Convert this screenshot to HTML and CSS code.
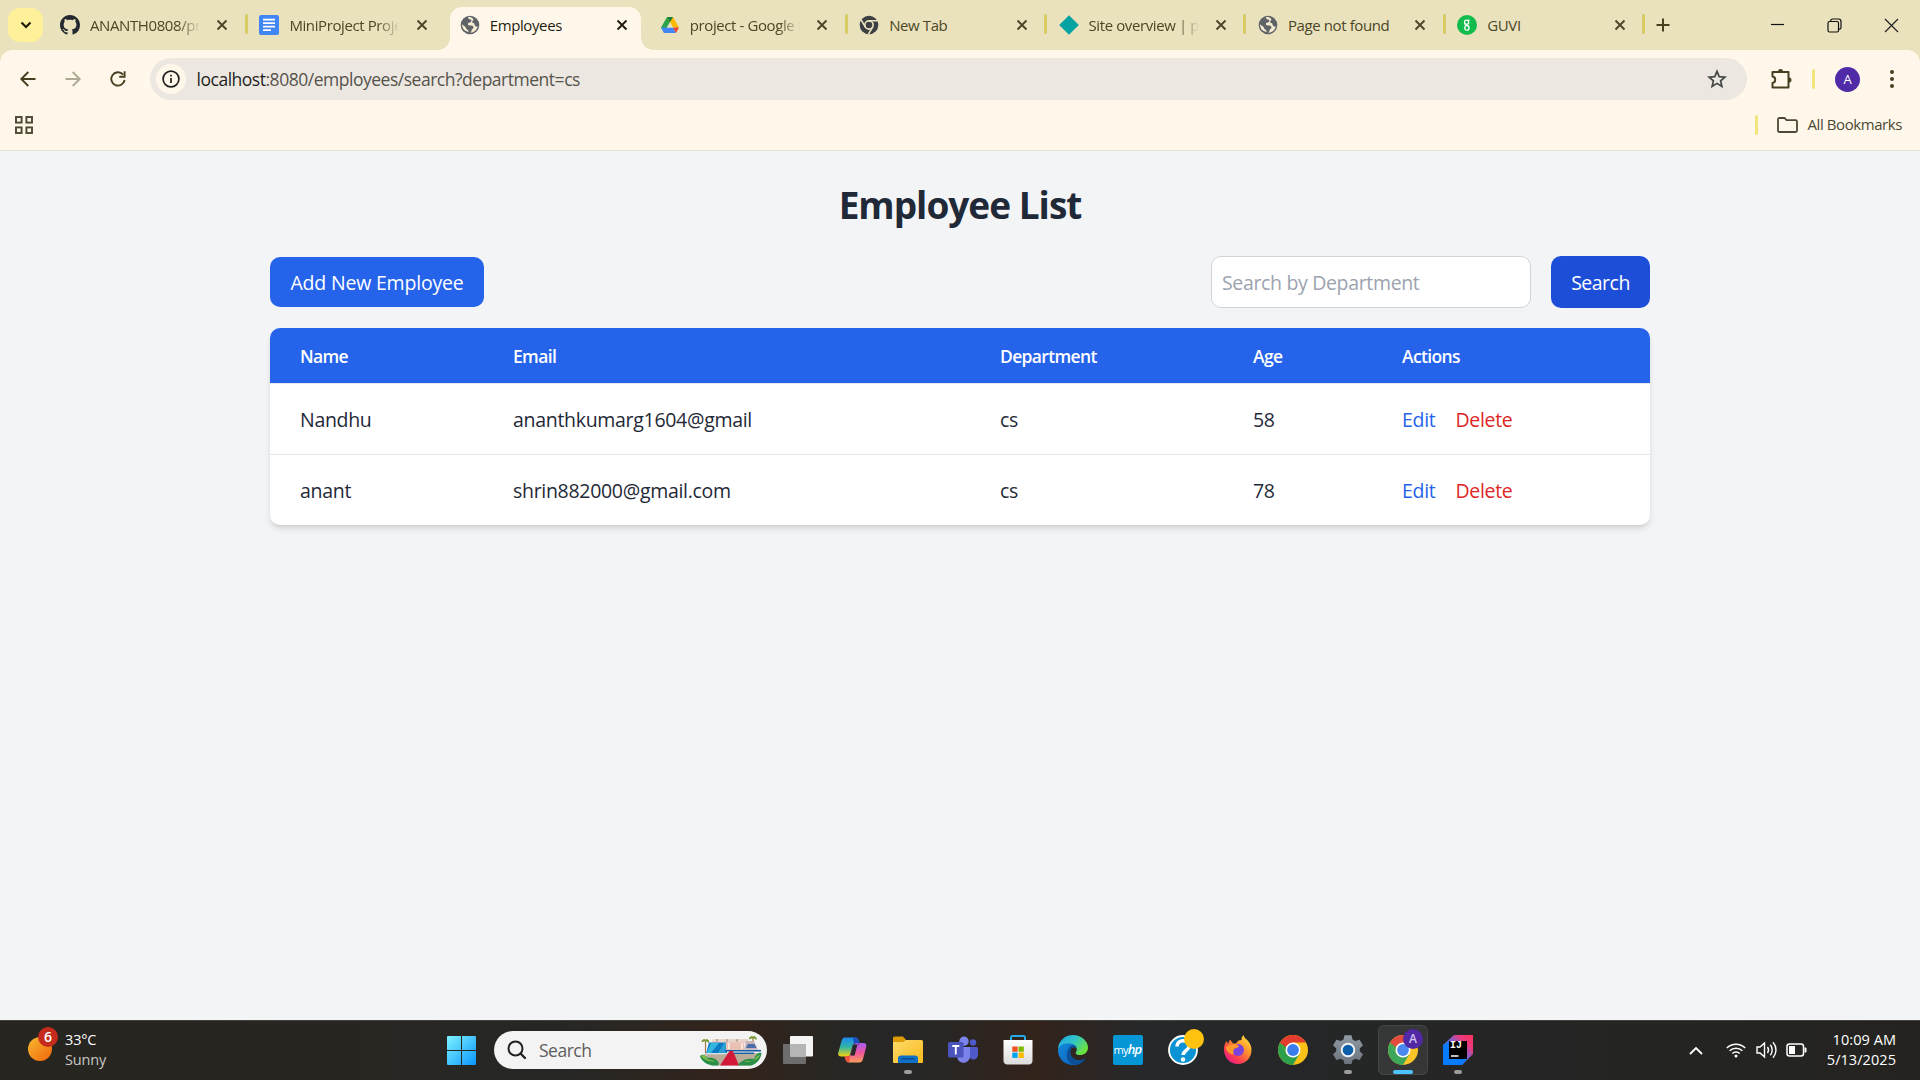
FILE: index.html
```html
<!DOCTYPE html>
<html lang="en">
<head>
<meta charset="utf-8">
<title>Employees</title>
<link rel="stylesheet" href="styles.css">
</head>
<body>
<svg class="defs" width="0" height="0" aria-hidden="true">
  <defs>
    <linearGradient id="sun" x1="0" y1="0" x2="1" y2="1"><stop offset="0" stop-color="#f7b92e"/><stop offset="1" stop-color="#f0650c"/></linearGradient>
    <linearGradient id="win" x1="0" y1="0" x2="1" y2="1"><stop offset="0" stop-color="#7df3ff"/><stop offset="1" stop-color="#0a96fb"/></linearGradient>
    <linearGradient id="fold" x1="0" y1="0" x2="1" y2="1"><stop offset="0" stop-color="#ffdb6b"/><stop offset="1" stop-color="#f9b91c"/></linearGradient>
    <linearGradient id="edgeTop" x1="0" y1="0" x2="1" y2="0.6"><stop offset="0" stop-color="#1da4e6"/><stop offset=".5" stop-color="#2fc3c9"/><stop offset="1" stop-color="#6ce23c"/></linearGradient>
    <linearGradient id="edgeBot" x1="0" y1="0" x2="1" y2="1"><stop offset="0" stop-color="#1288dc"/><stop offset="1" stop-color="#0b5cb4"/></linearGradient>
    <linearGradient id="copA" x1="0" y1="0" x2="0" y2="1"><stop offset="0" stop-color="#1e8af2"/><stop offset=".5" stop-color="#2fb5a5"/><stop offset="1" stop-color="#f4d30e"/></linearGradient>
    <linearGradient id="copB" x1="0" y1="0" x2="0" y2="1"><stop offset="0" stop-color="#a85cf5"/><stop offset=".5" stop-color="#f0559a"/><stop offset="1" stop-color="#fd9f5a"/></linearGradient>
    <linearGradient id="fox" x1="1" y1="0" x2="0.2" y2="1"><stop offset="0" stop-color="#fff04a"/><stop offset=".4" stop-color="#ff9a2a"/><stop offset=".75" stop-color="#ff3f50"/><stop offset="1" stop-color="#e3158a"/></linearGradient>
    <linearGradient id="ijB" x1="0" y1="1" x2="1" y2="0"><stop offset="0" stop-color="#087cfa"/><stop offset=".5" stop-color="#6b6ae0"/><stop offset=".75" stop-color="#e83a7d"/><stop offset="1" stop-color="#fe315d"/></linearGradient>
    <linearGradient id="bag" x1="0" y1="0" x2="0" y2="1"><stop offset="0" stop-color="#ffffff"/><stop offset="1" stop-color="#dcdcdc"/></linearGradient>
    <linearGradient id="gear" x1="0" y1="0" x2="0" y2="1"><stop offset="0" stop-color="#8f99a3"/><stop offset="1" stop-color="#6c757e"/></linearGradient>
    <symbol id="x" viewBox="0 0 12 12"><path d="M1.500 1.500l9 9M10.500 1.500l-9 9" stroke="currentColor" stroke-width="1.900" fill="none"/></symbol>
    <symbol id="globe" viewBox="0 0 20 20"><circle cx="10" cy="10" r="9.300" fill="#5f6368"/><path d="M8.200 2.100c-.5 1.500.8 2.300 2.200 2.500 1.200.2 1.400 1.600.4 2.300-1 .7-2.800.4-2.900 2-.1 1.400 1.300 1.600 2.800 1.500 1.800-.1 2.900.7 2.700 2.300-.2 1.200-1.700 1.300-1.900 2.700-.1.900-.4 1.700-1.300 2.400 4-.1 7-2.900 7.500-6.500-1.300.6-2.400.1-2.900-1-.5-1-.2-1.900-1.500-2.200-1.200-.3-1.700-1.200-.7-2.100.8-.7 1-1.600.4-2.300C11.600 2.100 9.900 1.700 8.200 2.100zM2.100 9c-.3 2.900 1.200 5.700 3.500 7.100l3 1c.3-1.200-.5-2-1.500-2.500-1-.6-.9-1.700-1.600-2.600C4.600 10.900 3 10.500 2.100 9z" fill="#f3ecd2"/></symbol>
    <symbol id="chrome" viewBox="0 0 30 30"><circle cx="15" cy="15" r="15" fill="#fbc116"/><path d="M2.010 7.500A15 15 0 0 0 15 30L21.500 18.750 15 15 8.500 18.750z" fill="#2da04b"/><path d="M2.010 7.500A15 15 0 0 1 27.990 7.500H15L8.500 11.250 7 14z" fill="#e33b2e"/><path d="M2.010 7.500L8.500 18.750 9 13z" fill="#2da04b"/><circle cx="15" cy="15" r="7.500" fill="#fff"/><circle cx="15" cy="15" r="5.900" fill="#3b7ded"/></symbol>
  </defs>
</svg>

<header class="browser">
  <div class="tabstrip">
    <button class="tabsearch"><svg width="12" height="8" viewBox="0 0 12 8"><path d="M1.500 1.500L6 6l4.500-4.500" stroke="#1f1c08" stroke-width="2.200" fill="none"/></svg></button>
    <div class="tabs">
      <div class="tab"><svg class="fav" viewBox="0 0 16 16"><path fill="#24292f" d="M8 0C3.580 0 0 3.580 0 8c0 3.540 2.290 6.530 5.470 7.590.4.070.55-.17.55-.38 0-.19-.01-.82-.01-1.490-2.010.37-2.530-.49-2.690-.94-.09-.23-.48-.94-.82-1.130-.28-.15-.68-.52-.01-.53.630-.01 1.080.58 1.230.82.72 1.210 1.870.87 2.330.66.070-.52.280-.87.510-1.070-1.780-.2-3.640-.89-3.640-3.950 0-.87.310-1.590.82-2.150-.08-.2-.36-1.020.08-2.120 0 0 .67-.21 2.200.82.640-.18 1.320-.27 2-.27s1.360.09 2 .27c1.530-1.040 2.200-.82 2.200-.82.440 1.100.160 1.920.080 2.120.510.560.820 1.270.820 2.150 0 3.070-1.870 3.750-3.650 3.950.290.250.540.730.540 1.480 0 1.070-.01 1.930-.01 2.200 0 .210.150.460.550.380A8.010 8.010 0 0 0 16 8c0-4.420-3.580-8-8-8z"/></svg><span class="title fade">ANANTH0808/proj</span><svg class="close"><use href="#x"/></svg></div>
      <div class="tab before-active"><svg class="fav" viewBox="0 0 20 20"><rect width="20" height="20" rx="2" fill="#4285f4"/><path d="M4 4.700h12M4 8.200h12M4 11.700h12M4 15.200h8" stroke="#fff" stroke-width="1.800"/></svg><span class="title fade">MiniProject Project</span><svg class="close"><use href="#x"/></svg></div>
      <div class="tab active"><svg class="fav" viewBox="0 0 20 20"><use href="#globe"/></svg><span class="title">Employees</span><svg class="close"><use href="#x"/></svg></div>
      <div class="tab"><svg class="fav" viewBox="0 0 20 20"><path d="M7 2h6l-3 5.200L4 17.500 1 12.400z" fill="#2ba24c"/><path d="M7 2h6l6 10.400h-6z" fill="#ffba00"/><path d="M7 2h6l-3 5.200z" fill="#188038"/><path d="M1 12.400h12L16 18H4z" fill="#4285f4"/><path d="M13 12.400h6L16 18z" fill="#ea4335"/><path d="M10 7.200l3 5.200H7z" fill="#ebe3bf"/></svg><span class="title fade">project - Google Dr</span><svg class="close"><use href="#x"/></svg></div>
      <div class="tab"><svg class="fav" viewBox="0 0 20 20"><circle cx="10" cy="10" r="9.300" fill="#3c4043"/><circle cx="10" cy="10" r="4.100" fill="none" stroke="#ebe3bf" stroke-width="1.600"/><path d="M10 5.800h8.700M6.400 12.100L2 4.700M13.600 12.100L9.300 19.400" stroke="#ebe3bf" stroke-width="1.600"/></svg><span class="title">New Tab</span><svg class="close"><use href="#x"/></svg></div>
      <div class="tab"><svg class="fav" viewBox="0 0 20 20"><path d="M10 .2L19.800 10 10 19.800.2 10z" fill="#05a3a1"/></svg><span class="title fade">Site overview | proj</span><svg class="close"><use href="#x"/></svg></div>
      <div class="tab"><svg class="fav" viewBox="0 0 20 20"><use href="#globe"/></svg><span class="title">Page not found</span><svg class="close"><use href="#x"/></svg></div>
      <div class="tab"><svg class="fav" viewBox="0 0 20 20"><circle cx="10" cy="10" r="10" fill="#11bb4c"/><g fill="none" stroke="#fff" stroke-width="1.300"><circle cx="9.600" cy="7.200" r="2.100"/><path d="M11.200 5.500l1.300-.7M8.600 9.100c-1 .8.300 1.300 1.500 1.400 2.600.2 2.600 4.700-.2 4.700s-2.900-3.600-.8-4"/></g></svg><span class="title">GUVI</span><svg class="close"><use href="#x"/></svg></div>
    </div>
    <button class="newtab"><svg width="14" height="14" viewBox="0 0 14 14"><path d="M7 .5v13M.5 7h13" stroke="#45401f" stroke-width="2"/></svg></button>
    <div class="winctl">
      <svg width="15" height="15" viewBox="0 0 15 15"><path d="M1 6.500h13" stroke="#111" stroke-width="1.200"/></svg>
      <svg width="15" height="15" viewBox="0 0 15 15" fill="none" stroke="#111" stroke-width="1.200"><rect x="1" y="3.500" width="10.500" height="10.500" rx="1.500"/><path d="M3.800 3.300V2.600C3.800 1.600 4.500 1 5.400 1h6.200C13 1 14 2 14 3.400v6c0 1-.6 1.700-1.600 1.700h-.6"/></svg>
      <svg width="15" height="15" viewBox="0 0 15 15"><path d="M1 1l13 13M14 1L1 14" stroke="#222" stroke-width="1.200"/></svg>
    </div>
  </div>

  <div class="toolbar">
    <nav class="nav">
      <svg width="18" height="18" viewBox="0 0 18 18" fill="none" stroke="#45401f" stroke-width="1.900"><path d="M16.500 9H2.500M9.300 2L2.300 9l7 7"/></svg>
      <svg width="18" height="18" viewBox="0 0 18 18" fill="none" stroke="#aca995" stroke-width="1.900"><path d="M1.500 9h14M8.700 2l7 7-7 7"/></svg>
      <svg width="18" height="18" viewBox="0 0 18 18" fill="none" stroke="#45401f" stroke-width="1.900"><path d="M15.600 10a6.700 6.700 0 1 1-1.500-5.400"/><path d="M15.600 1.300v5.400h-5.400"/></svg>
    </nav>
    <div class="omnibox">
      <span class="siteinfo"><svg width="18" height="18" viewBox="0 0 18 18"><circle cx="9" cy="9" r="7.900" fill="none" stroke="#1f1f1f" stroke-width="1.700"/><path d="M9 8v5M9 4.800v1.700" stroke="#1f1f1f" stroke-width="1.700"/></svg></span>
      <span class="url"><b>localhost</b>:8080/employees/search?department=cs</span>
      <svg class="star" width="20" height="20" viewBox="0 0 20 20"><path d="M10 2.300l2.200 5.300 5.700.5-4.300 3.700 1.300 5.600-4.900-3-4.900 3 1.300-5.600L2.100 8.100l5.700-.5z" fill="none" stroke="#444746" stroke-width="1.700"/></svg>
    </div>
    <div class="actions">
      <svg width="22" height="22" viewBox="0 0 22 22"><path d="M2.500 4h16v15.500h-16v-4.600c3.600-.4 3.600-5.900 0-6.300z" fill="none" stroke="#45401f" stroke-width="2" stroke-linejoin="round"/><path d="M8 3.500a2.500 2.500 0 0 1 5 0zM19 9.500a2.500 2.500 0 0 1 0 5z" fill="#45401f"/></svg>
      <i class="divider"></i>
      <span class="avatar">A</span>
      <svg width="4" height="20" viewBox="0 0 4 20" fill="#45401f"><circle cx="2" cy="3" r="2"/><circle cx="2" cy="10" r="2"/><circle cx="2" cy="17" r="2"/></svg>
    </div>
  </div>

  <div class="bookmarks">
    <svg width="18" height="18" viewBox="0 0 18 18" fill="none" stroke="#4b4833" stroke-width="1.900"><rect x="1" y="1" width="5.600" height="5.600"/><rect x="11.400" y="1" width="5.600" height="5.600"/><rect x="1" y="11.400" width="5.600" height="5.600"/><rect x="11.400" y="11.400" width="5.600" height="5.600"/></svg>
    <div class="allbm"><i class="divider"></i><svg width="21" height="16" viewBox="0 0 21 16"><path d="M1 2.500C1 1.600 1.600 1 2.500 1h5l2 2.200h9c.9 0 1.500.6 1.500 1.500v8.800c0 .9-.6 1.500-1.500 1.500h-16c-.9 0-1.500-.6-1.500-1.500z" fill="none" stroke="#4b4833" stroke-width="1.800"/></svg><span>All Bookmarks</span></div>
  </div>
</header>

<main class="page">
  <h1>Employee List</h1>
  <div class="controls">
    <a class="btn add">Add New Employee</a>
    <form class="search">
      <input type="text" placeholder="Search by Department">
      <button type="button" class="btn go">Search</button>
    </form>
  </div>
  <table class="list">
    <colgroup><col class="c1"><col class="c2"><col class="c3"><col class="c4"><col class="c5"></colgroup>
    <thead><tr><th>Name</th><th>Email</th><th>Department</th><th>Age</th><th>Actions</th></tr></thead>
    <tbody>
      <tr><td>Nandhu</td><td>ananthkumarg1604@gmail</td><td>cs</td><td>58</td><td><div class="ops"><a class="edit">Edit</a><a class="del">Delete</a></div></td></tr>
      <tr><td>anant</td><td>shrin882000@gmail.com</td><td>cs</td><td>78</td><td><div class="ops"><a class="edit">Edit</a><a class="del">Delete</a></div></td></tr>
    </tbody>
  </table>
</main>

<footer class="taskbar">
  <div class="weather">
    <div class="sunbox"><svg width="24" height="24" viewBox="0 0 24 24"><circle cx="12" cy="12" r="12" fill="url(#sun)"/></svg><span class="count">6</span></div>
    <div class="wtext"><span>33°C</span><span class="cond">Sunny</span></div>
  </div>
  <div class="dock">
    <svg class="start" width="29" height="29" viewBox="0 0 29 29"><path d="M1 0h13v14H0V1a1 1 0 0 1 1-1zM15 0h13a1 1 0 0 1 1 1v13H15zM0 15h14v14H1a1 1 0 0 1-1-1zM15 15h14v13a1 1 0 0 1-1 1H15z" fill="url(#win)"/></svg>
    <div class="tsearch">
      <svg width="20" height="20" viewBox="0 0 20 20"><circle cx="8.500" cy="8.500" r="7" fill="none" stroke="#222" stroke-width="2"/><path d="M13.500 13.500L18 18" stroke="#222" stroke-width="2.400" stroke-linecap="round"/></svg>
      <span>Search</span>
      <svg class="art" width="62" height="31" viewBox="0 0 62 31">
        <path d="M5 18h52l-6 12.500H12z" fill="#b9ac98"/>
        <path d="M5.500 6v14M53 3v6" stroke="#a5764a" stroke-width="1.200"/>
        <path d="M5.500 5C3.500 4 2 5 2 7c1-1 2-1 3.500-1 1 0 2 0 3 1.500C9 5 7.500 4 5.500 5zM53 2c-2-1-3.500 0-3.500 2 1-1 2-1 3.500-1 1 0 2 0 3 1.500C56.500 2 55 1 53 2z" fill="#7a9a35" stroke="#7a9a35"/>
        <path d="M13 4h35v4H11z" fill="#e9d5c9"/><path d="M17 4v3M27 4v3M37 4v3" stroke="#a08078"/>
        <path d="M9 7.500h18v11H6z" fill="#0b7cc4"/><path d="M11 8h8l-8 10H6.500z" fill="#35b6e0"/><path d="M24 8h2v10h-8z" fill="#2ba0d5"/><path d="M5 18.700h22" stroke="#e4e9f0" stroke-width="1.200"/>
        <path d="M26 7.500h18v8H26z" fill="#e8c0b4"/><path d="M29 8v6M42 8v6" stroke="#f7e6dc" stroke-width="2"/>
        <path d="M46 6h8l4 9H44z" fill="#c9b3bb"/><path d="M48 9h6.500l2 4H46z" fill="#4a6da8"/><path d="M44 14.500h16v2H44z" fill="#c4d3e6"/>
        <path d="M25 15h36v1.500H25zM34 17.500h20v1.500H34z" fill="#1b60a6"/>
        <path d="M29.500 16h3.500l6 14.500H20z" fill="#d3183a"/>
        <path d="M0 21c2-2.500 6-1 8 2 4-1 9 1 10 4 1 1 1 2.500 0 3.500h-6C5 29 1 25 0 21z" fill="#2a8f48"/><path d="M1 20.500c3-1 5 1 6 3s6 1 8 3c-5 0-11-1-14-6z" fill="#8dbd4a"/>
        <path d="M61.500 18c-4-1-6 2-7.500 6-5-1-10 0-13 3-2 1-3 2-3 3.500h13c5-1 10-6 10.500-12.500z" fill="#2a8f48"/><path d="M60 20c-3 0-4 3-6 5s-7 0-10 2c6 0 13-1 16-7z" fill="#8dbd4a"/>
      </svg>
    </div>
    <div class="apps">
      <span class="app"><svg width="30" height="28" viewBox="0 0 30 28"><rect y="8" width="23" height="20" rx="1" fill="#6d6d6d"/><rect x="7" width="23" height="20.500" rx="1" fill="#f4f4f4"/><path d="M7 8h16v12.500H7z" fill="#b5b5b5"/></svg></span>
      <span class="app"><svg width="29" height="26" viewBox="0 0 29 26"><path d="M7 .5h10c2.300 0 3.300 1.500 4 4l.4 1.500h-3c-2.500 0-3.500 1.500-4.200 4l-2 7c-.5 1.800-1.200 2.500-3 2.500H3c-2.400 0-3.300-1.600-2.700-4L3.500 4C4.200 1.700 5 .5 7 .5z" fill="url(#copA)"/><path d="M15 .5h2c2.300 0 3.300 1.500 4 4l.4 1.500h-3c-1 0-1.800.2-2.500.8z" fill="#1a4fc0"/><path d="M21.500 6h4c2.400 0 3.300 1.600 2.700 4l-3.200 12c-.6 2.200-1.500 3.500-3.500 3.500h-10c-2.300 0-3.500-1-4.200-4L6.500 19.500h3.200c1.800 0 2.600-1.200 3-2.500l2.500-8c.7-2 1.800-3 3.800-3h1.500l-2.800 9h-3z" fill="url(#copB)"/><path d="M6.500 19.500h3.200c1.200 0 2-.6 2.500-1.500l-1 7.500c-2.300 0-3.200-1.500-4-4z" fill="#f2503b"/><path d="M15.500 7.500h4l-3 11h-4z" fill="#252729"/></svg></span>
      <span class="app run"><svg width="30" height="28" viewBox="0 0 30 28"><path d="M0 2A1.500 1.500 0 0 1 1.500.5H10l3 3.500v4H0z" fill="#dd9b08"/><path d="M0 6h10l3-2h15.500A1.500 1.500 0 0 1 30 5.500V26a1 1 0 0 1-1 1H1a1 1 0 0 1-1-1z" fill="url(#fold)"/><path d="M5 27v-4.500c0-2 1-3 3-3h14c2 0 3 1 3 3V27z" fill="#0e70c6"/><path d="M8.500 22.800h13" stroke="#0a478a" stroke-width="1.300"/></svg></span>
      <span class="app"><svg width="30" height="28" viewBox="0 0 30 28"><circle cx="25" cy="6.500" r="3.200" fill="#5059c9"/><path d="M20 11h8.500c.8 0 1.500.6 1.500 1.500V18c0 7-8 7-9 2z" fill="#5059c9"/><circle cx="16" cy="5.200" r="4.700" fill="#7b83eb"/><path d="M9 11h13v9c0 9-13 9-13 0z" fill="#7b83eb"/><rect y="6" width="15.500" height="15.500" rx="1.500" fill="#4b53bc"/><path d="M4.300 10h7M7.800 10v8.500" stroke="#fff" stroke-width="1.900"/></svg></span>
      <span class="app"><svg width="30" height="30" viewBox="0 0 30 30"><path d="M8 6V2.500C8 1.500 8.500 1 9.500 1h11c1 0 1.500.5 1.500 1.500V6" fill="none" stroke="#25a7e8" stroke-width="2"/><path d="M.5 5h29v20.500c0 2.500-1.500 4-4 4h-21c-2.500 0-4-1.500-4-4z" fill="url(#bag)"/><path d="M9.300 11.500h5.300v5.300H9.300z" fill="#f25022"/><path d="M15.500 11.500h5.300v5.300h-5.300z" fill="#7fba00"/><path d="M9.300 17.600h5.300v5.300H9.300z" fill="#00a4ef"/><path d="M15.500 17.600h5.300v5.300h-5.300z" fill="#ffb900"/></svg></span>
      <span class="app"><svg width="30" height="30" viewBox="0 0 30 30"><path d="M0 15C0 6 7 0 15 0s15 6 15 12.500c0 5-4 7.500-8 7.500-3.500 0-5-1.200-4-2.700 2.500-4-1-7.800-6-7.800C6 9.500 1 11 0 15z" fill="url(#edgeTop)"/><path d="M0 15C1 11 5 8.200 10.500 8.200c5.500 0 8 3 8.200 5.500-1-2-6-2.500-6.500 2.500-.5 6 5 9.500 10 9 2.500-.2 4-1 5.300-1.800C24.500 28 20 30 15 30 6.500 30 0 23.500 0 15z" fill="url(#edgeBot)"/><path d="M12.200 16.200c-.5 6 5 9.500 10 9 2.500-.2 4-1 5.300-1.800-2.500 4-7 6.300-10.500 6.400C9 29 6 19 12.200 11.200c2-1.700 6-.8 6.500 2.500-1-2-6-2.500-6.500 2.500z" fill="#0c4f97"/></svg></span>
      <span class="app"><span class="hp">my<b>hp</b></span></span>
      <span class="app"><svg width="30" height="30" viewBox="0 0 30 30"><circle cx="15" cy="15" r="14" fill="#0b93d4" stroke="#fff" stroke-width="1.800"/><path d="M9 11.500c0-8 12.500-7.500 12 0-.3 4-5.800 4-5.800 8.500" fill="none" stroke="#fff" stroke-width="3.600"/><circle cx="15" cy="24.500" r="2.200" fill="#fff"/></svg><i class="notice"></i></span>
      <span class="app"><svg width="30" height="30" viewBox="0 0 30 30"><path d="M1 14c0-3 1-6 2.500-8L5 9l2-4.500 3 4h3l2.500-3 3-.5c0-2 .5-3.500 2-5 .5 3 3 4 5 6.500 2 2.500 3.300 5.500 3 9C28 23.500 22.500 29 15 29 7 29 1 23 1 14z" fill="url(#fox)"/><circle cx="15" cy="15" r="6" fill="#7a43dc"/><path d="M3 12c3-2 6-3 10-3l3 2c-1 2-3 2-4.500 2.500C10 15 10 17 11 19.500 6 19 3 16 3 12z" fill="#ff9a2a"/></svg></span>
      <span class="app"><svg width="30" height="30"><use href="#chrome"/></svg></span>
      <span class="app run"><svg width="30" height="30" viewBox="0 0 30 30"><path d="M11.500 1h7l1 4.300 2.800 1.600 4.300-1.300 3.400 6-3.200 3v3.200l3.200 3-3.400 6-4.300-1.300-2.800 1.500-1 4h-7l-1-4-2.800-1.500-4.300 1.300-3.400-6 3.200-3v-3.200l-3.200-3 3.400-6 4.300 1.300L10.500 5.300z" transform="translate(0 -.7) scale(1 .96)" fill="url(#gear)"/><circle cx="15" cy="15" r="6.300" fill="#0c5eaa" stroke="#f2f2f2" stroke-width="1.900"/></svg></span>
      <span class="app cur"><svg width="30" height="30"><use href="#chrome"/></svg><i class="prof">A</i></span>
      <span class="app run"><svg width="30" height="30" viewBox="0 0 30 30"><path d="M0 10L11 0h19v19L19 30H1.500A1.500 1.500 0 0 1 0 28.500z" fill="url(#ijB)"/><path d="M0 10l6-3 4 17h14l-5 6H1.500A1.500 1.500 0 0 1 0 28.500z" fill="#087cfa"/><rect x="6" y="6" width="18" height="18" fill="#000"/><path d="M8 21h7.500" stroke="#fff" stroke-width="1.500"/></svg><em>IJ</em></span>
    </div>
  </div>
  <div class="tray">
    <svg class="chev" width="14" height="9" viewBox="0 0 14 9"><path d="M1 8l6-6 6 6" fill="none" stroke="#fff" stroke-width="1.800"/></svg>
    <svg class="wifi" width="20" height="16" viewBox="0 0 20 16" fill="none" stroke="#fff" stroke-width="1.500"><path d="M.8 6a13 13 0 0 1 18.400 0M3.600 8.800a9 9 0 0 1 12.800 0M6.300 11.500a5.300 5.300 0 0 1 7.400 0"/><circle cx="10" cy="14" r="1.500" fill="#fff" stroke="none"/></svg>
    <svg class="vol" width="21" height="18" viewBox="0 0 21 18" fill="none" stroke="#fff" stroke-width="1.400"><path d="M1 6h3l4.500-4v14L4 12H1zM11.500 6c1.300 1.800 1.300 4.200 0 6M14.300 3.800c2.500 3 2.500 7.400 0 10.400M17 1.200c4 4.500 4 11.100 0 15.600"/></svg>
    <svg class="bat" width="21" height="14" viewBox="0 0 21 14"><rect x="1" y="1" width="16.500" height="12" rx="2.500" fill="none" stroke="#fff" stroke-width="1.500"/><path d="M3 3h6v8H3zM18.500 4.500h1.200c.6 0 .8.300.8.800v3.400c0 .5-.2.800-.8.800h-1.200z" fill="#fff"/></svg>
    <div class="clock"><span>10:09 AM</span><span>5/13/2025</span></div>
  </div>
</footer>
</body>
</html>
```
FILE: styles.css
```css
* { box-sizing: border-box; }
body {
  margin: 0;
  width: 1920px;
  height: 1080px;
  overflow: hidden;
  display: flex;
  flex-direction: column;
  font-family: "Open Sans", "Noto Sans", sans-serif;
  background: #f3f4f6;
}
button { border: 0; padding: 0; font: inherit; }
svg { flex: none; display: block; }
.defs { position: absolute; }

/* browser frame */
.browser { height: 151px; background: #fff8ea; border-bottom: 1px solid #e7e2d4; flex: none; }
.tabstrip { height: 50px; background: #eae2bd; display: flex; align-items: center; padding-left: 8px; }
.tabsearch { width: 35px; height: 34px; border-radius: 12px; background: #fff19a; display: grid; place-items: center; margin-right: 4px; }
.tabs { display: flex; height: 50px; }
.tab { flex: none; width: 199.400px; display: flex; align-items: center; padding: 0 18px 0 13px; position: relative; isolation: isolate; color: #4b4628; }
.tab::after { content: ""; position: absolute; right: -1.500px; top: 14px; width: 3px; height: 20px; border-radius: 2px; background: #d8cb66; }
.before-active::after { display: none; }
.fav { width: 20px; height: 20px; margin-right: 10px; }
.title { width: 113px; font-size: 15px; line-height: 24px; white-space: nowrap; overflow: hidden; letter-spacing: -.4px; }
.fade { -webkit-mask-image: linear-gradient(90deg, #000 78%, transparent 98%); mask-image: linear-gradient(90deg, #000 78%, transparent 98%); }
.close { width: 12px; height: 12px; margin-left: auto; }
.active { color: #1f1d10; margin: 0 .600px 0 1px; }
.active::before, .active::after { content: ""; position: absolute; z-index: -1; }
.active::before {
  left: -9px; right: -7px; bottom: 0; height: 12px;
  background:
    radial-gradient(circle at 0 0, transparent 11.500px, #fff8ea 12px) left / 12px 12px no-repeat,
    radial-gradient(circle at 100% 0, transparent 11.500px, #fff8ea 12px) right / 12px 12px no-repeat;
}
.active::after { left: 3px; right: 5px; top: 7px; width: auto; height: 43px; border-radius: 12px 12px 0 0; background: #fff8ea; }
.newtab { width: 39px; height: 34px; background: none; display: grid; place-items: center; }
.winctl { margin-left: auto; display: flex; gap: 42px; padding-right: 21.500px; }

.toolbar {
  height: 58px; display: flex; align-items: center;
  background:
    radial-gradient(circle at 12px 12px, #fff8ea 11.500px, #eae2bd 12px) 0 0 / 12px 12px no-repeat,
    radial-gradient(circle at 0 12px, #fff8ea 11.500px, #eae2bd 12px) 100% 0 / 12px 12px no-repeat;
}
.nav { display: flex; gap: 27px; padding-left: 18.500px; width: 150px; }
.omnibox { width: 1597px; height: 42px; border-radius: 21px; background: #ece8e1; display: flex; align-items: center; padding: 0 20px 0 6px; }
.siteinfo { width: 30px; height: 30px; border-radius: 50%; background: #fff8ea; display: grid; place-items: center; margin-right: 10.500px; }
.url { font-size: 17.500px; line-height: 24px; padding-bottom: 1px; color: #56534d; letter-spacing: -.48px; }
.url b { font-weight: 400; color: #1f1f1f; }
.star { margin-left: auto; }
.actions { display: flex; align-items: center; padding-left: 23px; }
.divider { width: 3px; height: 20px; border-radius: 2px; background: #f2e57e; }
.actions .divider { margin: 0 20px; }
.avatar { width: 25px; height: 25px; border-radius: 50%; background: #4f2ba8; color: #fff; font-size: 13px; line-height: 25px; text-align: center; margin-right: 30px; }
.bookmarks { display: flex; justify-content: space-between; align-items: center; height: 42px; padding: 0 18px 8px 15px; }
.allbm { display: flex; align-items: center; font-size: 15px; line-height: 20px; color: #4b4833; }
.allbm svg { margin: 0 10px 0 19px; }
.allbm span { letter-spacing: -.42px; padding-bottom: 2px; }

/* employee page */
.page { flex: 1; padding: 31px 270px 0; color: #1f2937; }
h1 { margin: 0 0 29px; font-size: 37px; line-height: 45px; font-weight: 700; text-align: center; letter-spacing: -1px; }
.controls { display: flex; justify-content: space-between; align-items: center; height: 52px; margin-bottom: 20px; }
.btn { display: flex; align-items: center; justify-content: center; padding-top: 1px; border-radius: 10px; color: #fff; font-size: 19.500px; letter-spacing: -.2px; white-space: nowrap; }
.add { width: 214px; height: 50px; background: #2563eb; }
.search { display: flex; gap: 20px; }
.search input { width: 320px; height: 52px; border: 1px solid #d1d5db; border-radius: 10px; padding: 0 10px; font: 19.500px "Open Sans", sans-serif; letter-spacing: -.34px; background: #fff; }
.search input::placeholder { color: #9ca3af; opacity: 1; }
.go { width: 99px; height: 52px; background: #1d4ed8; letter-spacing: -.5px; }
.list { width: 1380px; table-layout: fixed; border-collapse: separate; border-spacing: 0; background: #fff; border-radius: 10px; overflow: hidden; box-shadow: 0 5px 7.500px -1px rgba(0,0,0,.1), 0 2.500px 5px -2.500px rgba(0,0,0,.1); }
.c1 { width: 213px; } .c2 { width: 487px; } .c3 { width: 253px; } .c4 { width: 149px; }
th { height: 55px; padding: 1px 30px 0; background: #2563eb; color: #fff; font-size: 17.500px; font-weight: 600; text-align: left; letter-spacing: -.65px; }
td { height: 71px; padding: 0 30px; border-top: 1px solid #e5e7eb; font-size: 19.500px; letter-spacing: -.3px; white-space: nowrap; }
.ops { display: flex; gap: 20px; }
.edit { color: #2563eb; }
.del { color: #dc2626; }

/* taskbar */
.taskbar { flex: none; height: 60px; padding-bottom: 1px; display: flex; align-items: center; border-top: 1px solid #42443f; color: #fff; background: linear-gradient(90deg, #272520 0, #272622 420px, #262725 560px, #33231b 740px, #262725 850px, #262726 920px, #33231b 1035px, #27282a 1140px, #252627 1300px, #242320 1920px); }
.weather { width: 447px; display: flex; align-items: center; padding-left: 28px; }
.sunbox { position: relative; width: 37px; padding-bottom: 2px; }
.count { position: absolute; left: 10px; top: -10px; width: 20px; height: 20px; border-radius: 50%; background: #c42b1c; font-size: 14px; line-height: 20px; text-align: center; font-weight: 600; }
.wtext, .clock { display: flex; flex-direction: column; font-size: 14.500px; line-height: 20px; padding-bottom: 1px; letter-spacing: -.15px; }
.cond { color: #c9c8c6; }
.dock { display: flex; align-items: center; }
.tsearch { width: 273px; height: 38px; margin: 0 3px 0 18px; border-radius: 19px; background: #f3f3f3; color: #5d5d5d; display: flex; align-items: center; padding: 0 5px 0 13px; font-size: 17.500px; letter-spacing: -.5px; }
.tsearch span { margin-left: 12px; }
.art { margin-left: auto; }
.apps { display: flex; }
.app { width: 55px; height: 50px; display: flex; align-items: center; justify-content: center; position: relative; }
.run::after, .cur::after { content: ""; position: absolute; left: 23.500px; bottom: 1px; width: 8px; height: 4px; border-radius: 2px; background: #9a9a9a; }
.cur::before { content: ""; position: absolute; inset: 0 2.500px; border-radius: 6px; background: rgba(255,255,255,.08); border: 1px solid rgba(255,255,255,.08); }
.cur::after { left: 17.500px; width: 20px; background: #4cc2ff; }
.hp { width: 30px; height: 30px; border-radius: 2px; background: #0596d5; font-size: 11px; line-height: 29px; text-align: center; letter-spacing: -.8px; }
.hp b { font-style: italic; font-size: 13px; font-weight: 600; }
.notice { position: absolute; left: 28.500px; top: 4px; width: 20px; height: 20px; border-radius: 50%; background: #ffc20e; }
.prof { position: absolute; left: 28px; top: 4px; width: 20px; height: 20px; border-radius: 50%; background: #5129a5; color: #cfc2f0; font-size: 12px; line-height: 20px; text-align: center; font-style: normal; font-weight: 600; letter-spacing: 0; }
.app em { position: absolute; left: 20px; top: 15px; font: bold 10px/12px "Liberation Mono", monospace; }
.tray { margin-left: auto; display: flex; align-items: center; padding-right: 24px; }
.wifi { margin-left: 23px; }
.vol { margin-left: 10px; }
.bat { margin-left: 9px; }
.clock { width: 89px; align-items: flex-end; letter-spacing: .06px; }
```
